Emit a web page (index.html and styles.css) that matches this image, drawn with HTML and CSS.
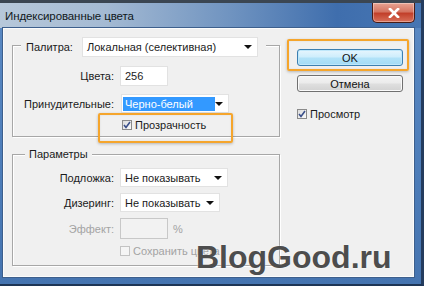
FILE: index.html
```html
<!DOCTYPE html>
<html>
<head>
<meta charset="utf-8">
<link rel="stylesheet" href="styles.css">
</head>
<body>
<div class="window">
  <div class="titlebar">
    <span class="title">Индексированные цвета</span>
    <div class="close"><svg width="12" height="10" viewBox="0 0 12 10"><path d="M2 1 L10 9 M10 1 L2 9" stroke="#fff" stroke-width="2.6" stroke-linecap="square"/></svg></div>
  </div>
  <div class="client">
    <div class="leftcol">
      <div class="group g1">
        <div class="legendrow">
          <span class="lbl-pal">Палитра:</span>
          <div class="select w176"><span class="val">Локальная (селективная)</span><span class="arrow"></span></div>
        </div>
        <div class="row r-colors">
          <span class="lbl">Цвета:</span>
          <div class="input w48">256</div>
        </div>
        <div class="row r-forced">
          <span class="lbl">Принудительные:</span>
          <div class="select w108 shift1"><span class="sel">Черно-белый</span><span class="arrow"></span></div>
        </div>
        <div class="row r-trans">
          <span class="lbl"></span>
          <label class="check shift2"><span class="box checked"><svg width="8" height="8" viewBox="0 0 8 8"><path d="M1 4 L3 6.5 L7 1" stroke="#3a4f8a" stroke-width="1.6" fill="none"/></svg></span>Прозрачность</label>
        </div>
      </div>
      <div class="group g2">
        <div class="legend">Параметры</div>
        <div class="row r-bg">
          <span class="lbl">Подложка:</span>
          <div class="select w108"><span class="val">Не показывать</span><span class="arrow"></span></div>
        </div>
        <div class="row r-dith">
          <span class="lbl">Дизеринг:</span>
          <div class="select w100"><span class="val">Не показывать</span><span class="arrow"></span></div>
        </div>
        <div class="row r-eff">
          <span class="lbl dis">Эффект:</span>
          <div class="input w48 disabled"></div>
          <span class="pct">%</span>
        </div>
        <div class="row r-keep">
          <span class="lbl"></span>
          <label class="check dis"><span class="box disbox"></span>Сохранить цвета</label>
        </div>
      </div>
    </div>
    <div class="rightcol">
      <div class="btn ok">OK</div>
      <div class="btn cancel">Отмена</div>
      <label class="check preview"><span class="box checked"><svg width="8" height="8" viewBox="0 0 8 8"><path d="M1 4 L3 6.5 L7 1" stroke="#3a4f8a" stroke-width="1.6" fill="none"/></svg></span>Просмотр</label>
    </div>
  </div>
  <div class="hl hl-ok"></div>
  <div class="hl hl-trans"></div>
  <div class="watermark">BlogGood.ru</div>
</div>
</body>
</html>
```

FILE: styles.css
```css
* { box-sizing: border-box; }
html, body { margin: 0; padding: 0; background: #2c3a4c; }
body { font-family: "Liberation Sans", Arial, sans-serif; font-size: 11px; color: #1b1b1b; }

.window {
  position: relative;
  width: 424px;
  height: 286px;
  overflow: hidden;
  background: linear-gradient(180deg, #5b8ac4 0%, #4d7db9 60%, #4574b0 100%);
  border-bottom: 2px solid #1e3555;
  border-right: 3px solid #243c5e;
}

.titlebar {
  height: 28px;
  display: flex;
  align-items: center;
  padding-left: 5px;
  padding-top: 3px;
  border-top: 3px solid #3b4652;
  background: linear-gradient(90deg, #b7c8da 0%, #a4bad3 25%, #6f93c0 55%, #3f6ead 80%, #4776b3 100%);
}
.title { color: #101820; font-size: 11.5px; letter-spacing: -0.1px; margin-top: -3px; }
.close {
  margin-left: auto;
  margin-right: 6px;
  margin-top: -8px;
  width: 43px;
  height: 20px;
  border: 1px solid #4a1c14;
  border-top: none;
  border-radius: 0 0 5px 5px;
  background: linear-gradient(180deg, #e8a493 0%, #d47562 45%, #c2402b 55%, #d8705a 100%);
  box-shadow: inset 0 0 0 1px rgba(255,255,255,0.35);
  display: flex;
  align-items: center;
  justify-content: center;
}

.client {
  margin-left: 3px;
  width: 411px;
  height: 249px;
  background: #f0f0f0;
  border: 1px solid #fbfbfb;
  outline: 1px solid #3d5f8c;
  display: flex;
  padding-left: 8px;
}

.leftcol { width: 268px; display: flex; flex-direction: column; }
.rightcol { width: 106px; margin-left: 17px; display: flex; flex-direction: column; }

.group {
  border: 1px solid #a7a7a7;
  box-shadow: 1px 1px 0 #fff, inset 1px 1px 0 #fff;
  display: flex;
  flex-direction: column;
}
.g1 { margin-top: 16px; height: 92px; }
.g2 { margin-top: 17px; height: 112px; }

.legendrow {
  margin: -9px 0 0 8px;
  height: 20px;
  align-self: flex-start;
  background: #f0f0f0;
  padding: 0 8px 0 5px;
  display: flex;
  align-items: center;
}
.lbl-pal { width: 56px; }

.legend {
  margin: -8px 0 0 12px;
  align-self: flex-start;
  height: 14px;
  line-height: 14px;
  padding: 0 4px;
  background: #f0f0f0;
}

.row { display: flex; align-items: center; }
.lbl { width: 101px; margin-right: 6px; text-align: right; white-space: nowrap; }
.dis { color: #a3a3a3; }

.r-colors { margin-top: 9px; height: 20px; }
.r-forced { margin-top: 8px; height: 19px; }
.r-trans { margin-top: 5px; height: 14px; }
.r-bg { margin-top: 7px; height: 19px; }
.r-dith { margin-top: 6px; height: 19px; }
.r-eff { margin-top: 6px; height: 21px; }
.r-keep { margin-top: 6px; height: 12px; }

.select {
  height: 100%;
  background: #fff;
  border: 1px solid #e2e2e2;
  display: flex;
  align-items: center;
  padding-left: 4px;
  position: relative;
  white-space: nowrap;
}
.select .arrow {
  margin-left: auto;
  margin-right: 5px;
  width: 0; height: 0;
  border-left: 4px solid transparent;
  border-right: 4px solid transparent;
  border-top: 4px solid #111;
}
.w176 { width: 176px; height: 20px; }
.w108 { width: 108px; }
.w100 { width: 100px; }
.shift1 { margin-left: 1px; padding-left: 1px; }
.sel {
  background: #3399ff;
  color: #fff;
  height: 14px;
  line-height: 14px;
  width: 92px;
  padding-left: 2px;
}

.input {
  height: 100%;
  background: #fff;
  border: 1px solid #e2e2e2;
  display: flex;
  align-items: center;
  padding-left: 4px;
}
.w48 { width: 48px; }
.input.disabled { background: #f2f2f2; border-color: #c8c8c8; }
.pct { margin-left: 5px; color: #a3a3a3; }

.check { display: flex; align-items: center; white-space: nowrap; }
.shift2 { margin-left: 2px; }
.box {
  width: 10px;
  height: 10px;
  border: 1px solid #8a8a8a;
  background: linear-gradient(135deg, #dcdcdc, #fafafa);
  margin-right: 3px;
  display: flex;
  align-items: center;
  justify-content: center;
}
.disbox { border-color: #c3c3c3; background: #f5f5f5; }

.btn {
  height: 17px;
  border-radius: 3px;
  display: flex;
  align-items: center;
  justify-content: center;
  color: #111;
}
.ok {
  margin-top: 20px;
  border: 1px solid #3c7fb1;
  background: linear-gradient(180deg, #e6f5fd 0%, #cfeefc 45%, #b1e2f8 55%, #a3dbf5 100%);
  box-shadow: inset 0 0 0 1px #bfe7fa;
}
.cancel {
  margin-top: 9px;
  border: 1px solid #707070;
  background: linear-gradient(180deg, #f4f4f4 0%, #ebebeb 45%, #dedede 55%, #d2d2d2 100%);
  box-shadow: inset 0 0 0 1px #fafafa;
}
.preview { margin-top: 16px; height: 12px; }

.hl {
  position: absolute;
  border: 2px solid #f5a52c;
  border-radius: 2px;
  box-shadow: 0 1px 3px rgba(0,0,0,0.25), inset 0 0 2px rgba(0,0,0,0.1);
}
.hl-ok { left: 287px; top: 39px; width: 122px; height: 32px; }
.hl-trans { left: 98px; top: 113px; width: 135px; height: 30px; }

.watermark {
  position: absolute;
  left: 196px;
  top: 241px;
  font-family: "Liberation Sans", Arial, sans-serif;
  font-weight: bold;
  font-size: 32px;
  line-height: 32px;
  color: #4d4d4d;
  letter-spacing: 0;
  text-shadow: 0 0 2px rgba(255,255,255,0.8);
}
```
